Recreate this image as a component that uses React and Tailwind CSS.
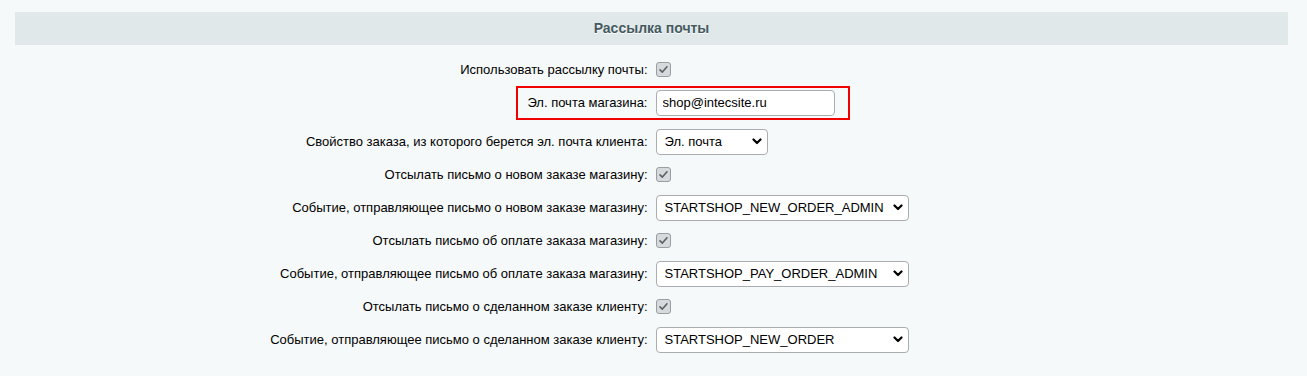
import { useState } from 'react'

const FONT = "font-['Liberation_Sans',Arial,sans-serif]"

function Checkbox() {
  return (
    <span className="inline-flex w-[15px] h-[15px] items-center justify-center rounded-[3px] border border-[#999fa1] bg-[#d6dadc]">
      <svg width="11" height="11" viewBox="0 0 11 11" fill="none">
        <path d="M2 5.8 L4.4 8.1 L9 2.8" stroke="#5a6063" strokeWidth="1.6" strokeLinecap="round" strokeLinejoin="round" />
      </svg>
    </span>
  )
}

function Select({ value, options, width }) {
  return (
    <span className={`relative inline-flex items-center ${width}`}>
      <select
        defaultValue={value}
        className="appearance-none w-full h-[26px] pl-[8px] pr-[24px] bg-white border border-[#a9adaf] rounded-[4px] text-[13px] text-black outline-none"
      >
        {options.map((o) => (
          <option key={o} value={o}>{o}</option>
        ))}
      </select>
      <svg className="absolute right-[6px] pointer-events-none" width="10" height="7" viewBox="0 0 10 7" fill="none">
        <path d="M1.5 1.5 L5 5 L8.5 1.5" stroke="#000" strokeWidth="2.2" strokeLinecap="round" strokeLinejoin="round" />
      </svg>
    </span>
  )
}

function Row({ label, children, className = '' }) {
  return (
    <div className={`grid grid-cols-2 h-[33px] items-center ${className}`}>
      <div className="text-right pr-[4px] text-[13px] text-black">{label}</div>
      <div className="pl-[4px] flex items-center">{children}</div>
    </div>
  )
}

export default function App() {
  const [email, setEmail] = useState('shop@intecsite.ru')

  return (
    <div className={`min-h-[376px] bg-[#f5f9f9] pt-[12px] pl-[15px] pr-[19px] ${FONT}`}>
      <div className="h-[33px] bg-[#e0e8ea] flex items-center justify-center">
        <span className="text-[14px] font-bold text-[#455a60] [text-shadow:0_1px_0_#fff]">Рассылка почты</span>
      </div>

      <div className="mt-[8px]">
        <Row label="Использовать рассылку почты:">
          <Checkbox />
        </Row>

        <div className="relative">
          <Row label="Эл. почта магазина:">
            <input
              value={email}
              onChange={(e) => setEmail(e.target.value)}
              className="w-[179px] h-[26px] pl-[6px] bg-white border border-[#a9adaf] rounded-[4px] text-[13px] text-black outline-none"
            />
          </Row>
          <div className="absolute left-[calc(50%-136px)] w-[334px] top-0 h-[34px] border-2 border-[#f00000] pointer-events-none" />
        </div>

        <Row label="Свойство заказа, из которого берется эл. почта клиента:" className="mt-[6px]">
          <Select value="Эл. почта" options={['Эл. почта']} width="w-[112px]" />
        </Row>
        <Row label="Отсылать письмо о новом заказе магазину:">
          <Checkbox />
        </Row>
        <Row label="Событие, отправляющее письмо о новом заказе магазину:">
          <Select value="STARTSHOP_NEW_ORDER_ADMIN" options={['STARTSHOP_NEW_ORDER_ADMIN']} width="w-[253px]" />
        </Row>
        <Row label="Отсылать письмо об оплате заказа магазину:">
          <Checkbox />
        </Row>
        <Row label="Событие, отправляющее письмо об оплате заказа магазину:">
          <Select value="STARTSHOP_PAY_ORDER_ADMIN" options={['STARTSHOP_PAY_ORDER_ADMIN']} width="w-[253px]" />
        </Row>
        <Row label="Отсылать письмо о сделанном заказе клиенту:">
          <Checkbox />
        </Row>
        <Row label="Событие, отправляющее письмо о сделанном заказе клиенту:">
          <Select value="STARTSHOP_NEW_ORDER" options={['STARTSHOP_NEW_ORDER']} width="w-[253px]" />
        </Row>
      </div>
    </div>
  )
}
